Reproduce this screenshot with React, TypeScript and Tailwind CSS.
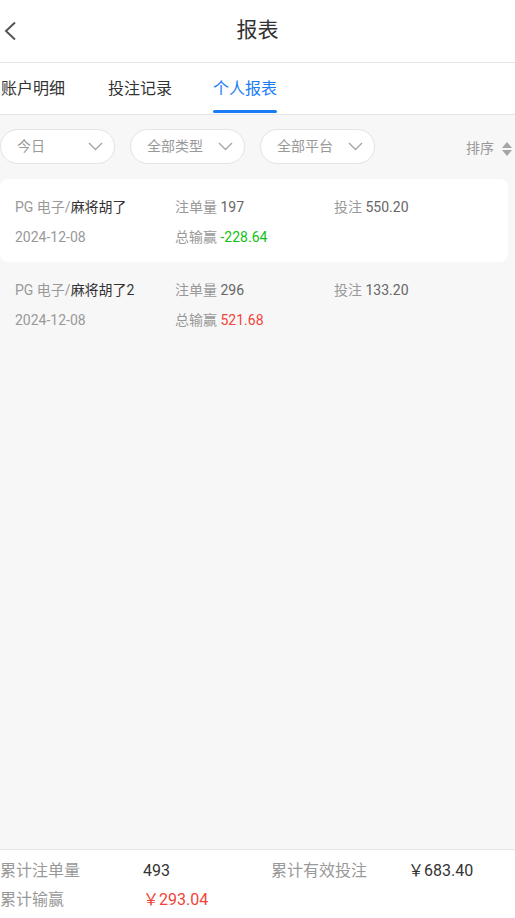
import React from 'react';

const font = { fontFamily: 'Roboto, "Noto Sans CJK SC", sans-serif' };

const records = [
  { platform: 'PG 电子/', game: '麻将胡了', date: '2024-12-08', count: '197', bet: '550.20', win: '-228.64', active: true },
  { platform: 'PG 电子/', game: '麻将胡了2', date: '2024-12-08', count: '296', bet: '133.20', win: '521.68', active: false },
];

const Chevron = () => (
  <svg width="15" height="9" viewBox="0 0 15 9" fill="none">
    <polyline points="1,1 7.5,7.5 14,1" stroke="#a6a6a6" strokeWidth="1.4" />
  </svg>
);

const Pill = ({ label }: { label: string }) => (
  <div className="flex h-[35px] w-[115px] items-center justify-between rounded-full border border-[#e3e3e3] bg-white pl-[16px] pr-[11px]">
    <span className="text-[14px] text-[#999]">{label}</span>
    <Chevron />
  </div>
);

const App = () => {
  return (
    <div style={font} className="flex h-[918px] flex-col overflow-hidden bg-[#f7f7f7]">
      <div className="relative flex h-[63px] items-center justify-center border-b border-[#e5e5e5] bg-white">
        <svg className="absolute left-[3px] top-[21px]" width="14" height="20" viewBox="0 0 14 20" fill="none">
          <polyline points="12,1.5 3,10 12,18.5" stroke="#555" strokeWidth="2" />
        </svg>
        <span className="text-[21px] text-[#333]">报表</span>
      </div>

      <div className="flex h-[52px] items-stretch border-b border-[#e5e5e5] bg-white text-[16px] text-[#333]">
        <div className="flex w-[108px] items-center pl-px">账户明细</div>
        <div className="flex w-[105px] items-center">投注记录</div>
        <div className="relative flex items-center text-[#1a7cf5]">
          个人报表
          <div className="absolute bottom-px left-0 right-0 h-[3px] rounded-sm bg-[#1a7cf5]" />
        </div>
      </div>

      <div className="flex items-center gap-[15px] pt-[14px]">
        <Pill label="今日" />
        <Pill label="全部类型" />
        <Pill label="全部平台" />
        <div className="ml-auto flex items-center gap-[8px] pr-[3px] pt-[4px]">
          <span className="text-[14px] text-[#999]">排序</span>
          <svg width="10" height="14" viewBox="0 0 10 14">
            <polygon points="5,0 10,6 0,6" fill="#a6a6a6" />
            <polygon points="0,8 10,8 5,14" fill="#a6a6a6" />
          </svg>
        </div>
      </div>

      <div className="mt-[15px] pr-[7px]">
        {records.map((r, i) => (
          <div key={i} className={`flex h-[83px] flex-col gap-[10px] rounded-lg pl-[15px] pt-[18px] text-[14px] ${r.active ? 'bg-white' : ''}`}>
            <div className="flex h-[20px] items-center">
              <div className="w-[160px]">
                <span className="text-[#999]">{r.platform}</span>
                <span className="text-[#333]">{r.game}</span>
              </div>
              <div className="w-[159px]">
                <span className="text-[#999]">注单量 </span>
                <span className="text-[#666]">{r.count}</span>
              </div>
              <div>
                <span className="text-[#999]">投注 </span>
                <span className="text-[#666]">{r.bet}</span>
              </div>
            </div>
            <div className="flex h-[20px] items-center">
              <div className="w-[160px] text-[#999]">{r.date}</div>
              <div>
                <span className="text-[#999]">总输赢 </span>
                <span className={r.win.startsWith('-') ? 'text-[#12c012]' : 'text-[#f0443a]'}>{r.win}</span>
              </div>
            </div>
          </div>
        ))}
      </div>

      <div className="flex-1" />

      <div className="h-[69px] border-t border-[#e5e5e5] bg-white pt-[9px] text-[16px]">
        <div className="grid grid-cols-[143px_128px_137px_1fr] gap-y-[5px]">
          <span className="text-[#999]">累计注单量</span>
          <span className="text-[#333]">493</span>
          <span className="text-[#999]">累计有效投注</span>
          <span className="text-[#333]">￥683.40</span>
          <span className="text-[#999]">累计输赢</span>
          <span className="text-[#f0443a]">￥293.04</span>
        </div>
      </div>
    </div>
  );
};

export default App;
